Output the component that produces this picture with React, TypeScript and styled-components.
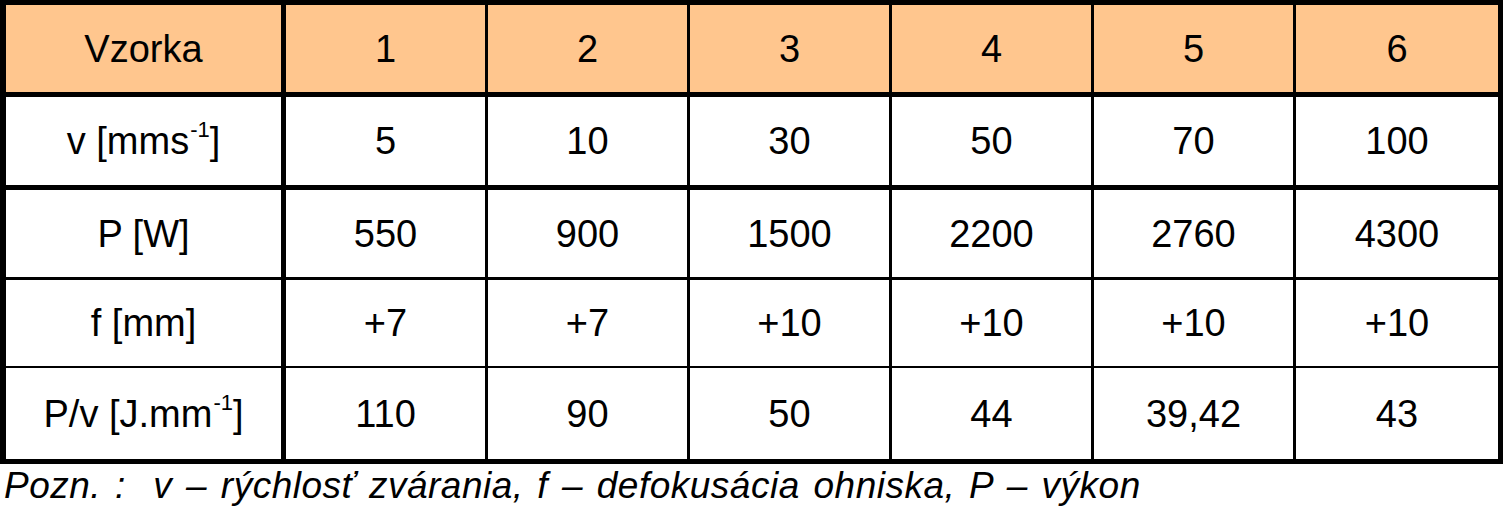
import styled, { createGlobalStyle } from "styled-components";

const GlobalStyle = createGlobalStyle`
  html, body {
    margin: 0;
    padding: 0;
    background: #ffffff;
  }
  body {
    font-family: "Liberation Sans", Arial, sans-serif;
    color: #000000;
  }
`;

const Page = styled.main`
  width: 1503px;
`;

const Table = styled.table`
  width: 1503px;
  border-collapse: separate;
  border-spacing: 0;
  border: 5px solid #000;
  border-left-width: 6px;
  table-layout: fixed;
  box-sizing: border-box;
`;

const LabelCol = styled.col`
  width: 280px;
`;

const Row = styled.tr<{ $height: number; $rule: number; $head?: boolean }>`
  background: ${({ $head }) => ($head ? "#ffc68e" : "#ffffff")};

  & > td {
    height: ${({ $height }) => $height}px;
    border-bottom: ${({ $rule }) => $rule}px solid #000;
  }
`;

const Cell = styled.td<{ $label?: boolean }>`
  padding: 0;
  box-sizing: border-box;
  text-align: center;
  vertical-align: middle;
  font-size: 38px;
  font-weight: 400;
  line-height: 1;
  border-right: ${({ $label }) => ($label ? 5 : 3)}px solid #000;

  &:last-child {
    border-right: none;
  }
`;

const Sup = styled.sup`
  font-size: 22px;
  line-height: 0;
  vertical-align: 17px;
  margin-left: 1px;
`;

const Note = styled.p`
  margin: 0;
  padding: 1px 0 0 4px;
  font-style: italic;
  font-size: 37px;
  line-height: 1.15;
  letter-spacing: 0.5px;
  word-spacing: 3px;
  white-space: pre;
`;

type RowData = {
  label: React.ReactNode;
  values: string[];
  height: number;
  rule: number;
  head?: boolean;
};

const rows: RowData[] = [
  { label: "Vzorka", values: ["1", "2", "3", "4", "5", "6"], height: 92, rule: 5, head: true },
  {
    label: (
      <>
        v [mms<Sup>-1</Sup>]
      </>
    ),
    values: ["5", "10", "30", "50", "70", "100"],
    height: 93,
    rule: 5,
  },
  { label: "P [W]", values: ["550", "900", "1500", "2200", "2760", "4300"], height: 90, rule: 3 },
  { label: "f [mm]", values: ["+7", "+7", "+10", "+10", "+10", "+10"], height: 88, rule: 2 },
  {
    label: (
      <>
        P/v [J.mm<Sup>-1</Sup>]
      </>
    ),
    values: ["110", "90", "50", "44", "39,42", "43"],
    height: 91,
    rule: 0,
  },
];

export default function App() {
  return (
    <Page>
      <GlobalStyle />
      <Table>
        <colgroup>
          <LabelCol />
          <col />
          <col />
          <col />
          <col />
          <col />
          <col />
        </colgroup>
        <tbody>
          {rows.map((row, i) => (
            <Row key={i} $height={row.height} $rule={row.rule} $head={row.head}>
              <Cell $label>{row.label}</Cell>
              {row.values.map((v, j) => (
                <Cell key={j}>{v}</Cell>
              ))}
            </Row>
          ))}
        </tbody>
      </Table>
      <Note>{"Pozn. :  v – rýchlosť zvárania, f – defokusácia ohniska, P – výkon"}</Note>
    </Page>
  );
}
